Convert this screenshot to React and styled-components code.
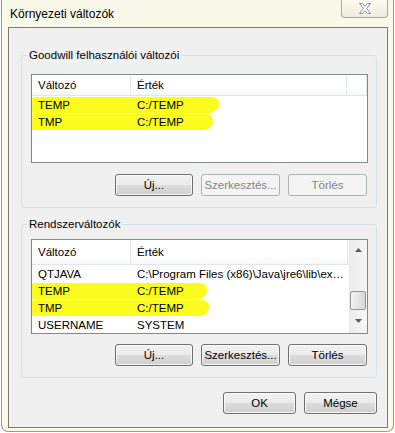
import React from 'react';
import styled, { createGlobalStyle } from 'styled-components';

const GlobalStyle = createGlobalStyle`
  html, body {
    margin: 0;
    padding: 0;
    background: #ffffff;
  }
  body {
    font-family: "Liberation Sans", Arial, sans-serif;
    font-size: 11.5px;
    color: #000000;
  }
`;

const userVars = [
  { name: 'TEMP', value: 'C:/TEMP', mark: 188 },
  { name: 'TMP', value: 'C:/TEMP', mark: 182 },
];

const systemVars = [
  { name: 'QTJAVA', value: 'C:\\Program Files (x86)\\Java\\jre6\\lib\\ex…' },
  { name: 'TEMP', value: 'C:/TEMP', mark: 176 },
  { name: 'TMP', value: 'C:/TEMP', mark: 178 },
  { name: 'USERNAME', value: 'SYSTEM' },
];

const Window = styled.div`
  box-sizing: border-box;
  width: 393px;
  height: 432px;
  margin-left: 1px;
  background: #f9f9e9;
  border: 1px solid #9a9a8c;
  border-top: none;
  border-radius: 0 0 7px 7px;
  padding: 0 5px 0 6px;
  display: flex;
  flex-direction: column;
`;

const TitleBar = styled.div`
  height: 27px;
  display: flex;
  justify-content: space-between;
  align-items: flex-start;
`;

const Title = styled.div`
  margin: 7px 0 0 2px;
  font-size: 12px;
  color: #000;
`;

const CloseButton = styled.div`
  box-sizing: border-box;
  width: 47px;
  height: 18px;
  border: 1px solid #a8a89a;
  border-top: none;
  border-radius: 0 0 4px 4px;
  background: linear-gradient(#fbfbf2, #ededdf);
  display: flex;
  align-items: center;
  justify-content: center;
`;

const Client = styled.div`
  box-sizing: border-box;
  height: 401px;
  border: 1px solid #7c7c70;
  background: #f0f0f0;
  padding: 20px 10px 0 12px;
  display: flex;
  flex-direction: column;
`;

const Group = styled.fieldset`
  margin: ${p => p.$top}px 0 0 0;
  padding: ${p => p.$padTop}px 8px 11px 9px;
  border: 1px solid #d5dfe5;
  border-radius: 3px;
  min-width: 0;
`;

const Legend = styled.legend`
  padding: 0 2px;
  margin-left: -4px;
  line-height: 15px;
  font-size: 11.5px;
`;

const ListBox = styled.div`
  position: relative;
  box-sizing: border-box;
  height: ${p => p.$height}px;
  border: 1px solid #828790;
  background: #ffffff;
  display: flex;
  overflow: hidden;
`;

const ListMain = styled.div`
  flex: 1;
  display: flex;
  flex-direction: column;
`;

const Header = styled.div`
  display: flex;
  height: ${p => p.$height}px;
  background: linear-gradient(#ffffff 60%, #f7f8fa);
  border-bottom: 1px solid #e5e5e5;
`;

const HeadCell = styled.div`
  box-sizing: border-box;
  width: ${p => p.$width ? `${p.$width}px` : 'auto'};
  flex: ${p => p.$width ? 'none' : '1'};
  padding-left: 6px;
  display: flex;
  align-items: center;
  border-right: 1px solid #e5e5e5;
`;

const Row = styled.div`
  position: relative;
  display: flex;
  height: 17px;
  align-items: center;
`;

const Cell = styled.div`
  position: relative;
  z-index: 1;
  box-sizing: border-box;
  width: ${p => p.$width ? `${p.$width}px` : 'auto'};
  flex: ${p => p.$width ? 'none' : '1'};
  padding-left: 6px;
  white-space: nowrap;
  overflow: hidden;
`;

const Marker = styled.div`
  position: absolute;
  left: -1px;
  top: 1px;
  height: 16px;
  background: #fbfb1e;
  border-radius: 2px 8px 8px 3px;
  transform: skewX(-8deg);
  z-index: 0;
`;

const ScrollBar = styled.div`
  width: 17px;
  display: flex;
  flex-direction: column;
  background: linear-gradient(90deg, #ececec, #f6f6f6);
  border-left: 1px solid #eaeaea;
`;

const ScrollArrow = styled.div`
  height: ${p => p.$height}px;
  display: flex;
  align-items: ${p => p.$align || 'center'};
  justify-content: center;
`;

const ScrollTrack = styled.div`
  flex: 1;
  display: flex;
  flex-direction: column;
  justify-content: flex-end;
  padding-bottom: 9px;
`;

const Thumb = styled.div`
  box-sizing: border-box;
  height: 19px;
  margin: 0 1px 0 0;
  border: 1px solid #979797;
  border-radius: 2px;
  background: linear-gradient(90deg, #f3f3f3, #e6e6e6 50%, #d6d6d6);
`;

const ButtonRow = styled.div`
  display: flex;
  justify-content: flex-end;
  gap: 8px;
  margin-top: ${p => p.$top}px;
  padding-right: ${p => p.$right}px;
`;

const Button = styled.div`
  box-sizing: border-box;
  width: ${p => p.$width}px;
  height: 22px;
  border: 1px solid ${p => p.$disabled ? '#adb2b5' : '#707070'};
  border-radius: 3px;
  background: ${p => p.$disabled
    ? '#f4f4f4'
    : 'linear-gradient(#f2f2f2, #ebebeb 48%, #dddddd 52%, #cfcfcf)'};
  color: ${p => p.$disabled ? '#838383' : '#000000'};
  box-shadow: inset 0 0 0 1px ${p => p.$disabled ? '#f4f4f4' : 'rgba(255,255,255,0.75)'};
  display: flex;
  align-items: center;
  justify-content: center;
`;

const CloseIcon = () => (
  <svg width="14" height="11" viewBox="0 0 14 11">
    <path
      d="M1.5 0.5 L4.5 0.5 L7 3.2 L9.5 0.5 L12.5 0.5 L8.6 5.5 L12.5 10.5 L9.5 10.5 L7 7.8 L4.5 10.5 L1.5 10.5 L5.4 5.5 Z"
      fill="#ffffff"
      stroke="#8a8f96"
      strokeWidth="1"
      strokeLinejoin="round"
    />
  </svg>
);

const ArrowUp = () => (
  <svg width="7" height="4" viewBox="0 0 7 4"><path d="M0 4 L3.5 0 L7 4 Z" fill="#5c5c5c" /></svg>
);

const ArrowDown = () => (
  <svg width="7" height="4" viewBox="0 0 7 4"><path d="M0 0 L3.5 4 L7 0 Z" fill="#5c5c5c" /></svg>
);

const VarList = ({ rows, height, headerHeight, scroll }) => (
  <ListBox $height={height}>
    <ListMain>
      <Header $height={headerHeight}>
        <HeadCell $width={99}>Változó</HeadCell>
        <HeadCell $width={scroll ? 217 : 216}>Érték</HeadCell>
        {!scroll && <HeadCell />}
      </Header>
      {rows.map((r, i) => (
        <Row key={i}>
          {r.mark && <Marker style={{ width: r.mark }} />}
          <Cell $width={99}>{r.name}</Cell>
          <Cell>{r.value}</Cell>
        </Row>
      ))}
    </ListMain>
    {scroll && (
      <ScrollBar>
        <ScrollArrow $height={20}><ArrowUp /></ScrollArrow>
        <ScrollTrack><Thumb /></ScrollTrack>
        <ScrollArrow $height={14} $align="flex-start"><ArrowDown /></ScrollArrow>
      </ScrollBar>
    )}
  </ListBox>
);

const App = () => (
  <>
    <GlobalStyle />
    <Window>
      <TitleBar>
        <Title>Környezeti változók</Title>
        <CloseButton><CloseIcon /></CloseButton>
      </TitleBar>
      <Client>
        <Group $top={0} $padTop={11}>
          <Legend>Goodwill felhasználói változói</Legend>
          <VarList rows={userVars} height={89} headerHeight={20} />
          <ButtonRow $top={11} $right={1}>
            <Button $width={78}>Új...</Button>
            <Button $width={79} $disabled>Szerkesztés...</Button>
            <Button $width={79} $disabled>Törlés</Button>
          </ButtonRow>
        </Group>
        <Group $top={9} $padTop={7}>
          <Legend>Rendszerváltozók</Legend>
          <VarList rows={systemVars} height={95} headerHeight={24} scroll />
          <ButtonRow $top={10} $right={1}>
            <Button $width={78}>Új...</Button>
            <Button $width={79}>Szerkesztés...</Button>
            <Button $width={79}>Törlés</Button>
          </ButtonRow>
        </Group>
        <ButtonRow $top={14} $right={0}>
          <Button $width={73}>OK</Button>
          <Button $width={73}>Mégse</Button>
        </ButtonRow>
      </Client>
    </Window>
  </>
);

export default App;
